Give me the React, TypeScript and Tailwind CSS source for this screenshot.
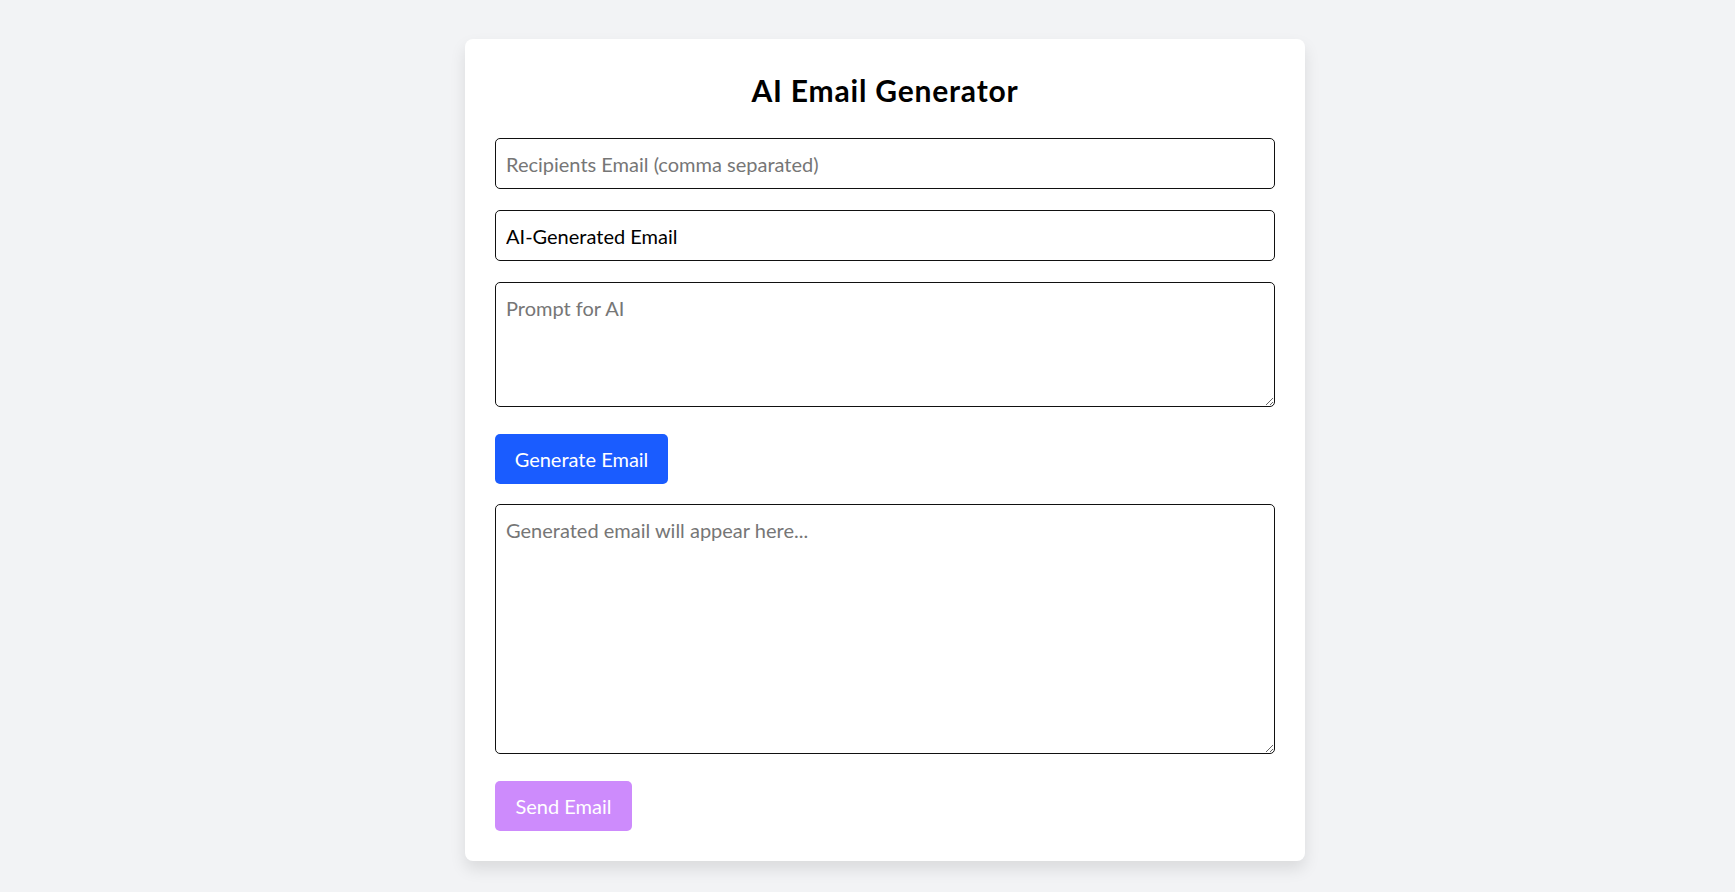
import { useState } from "react";

export default function App() {
  const [recipients, setRecipients] = useState("");
  const [subject, setSubject] = useState("AI-Generated Email");
  const [prompt, setPrompt] = useState("");
  const [body, setBody] = useState("");

  const font = { fontFamily: "Lato, 'Open Sans', sans-serif" };

  return (
    <div
      className="min-h-screen w-full bg-[#f2f3f5] flex justify-center pl-[35px] pt-[39px]"
      style={font}
    >
      <div className="w-[840px] h-[822px] bg-white rounded-[8px] shadow-[0_8px_16px_rgba(0,0,0,0.1)] px-[30px] pt-[30px] pb-[30px] flex flex-col items-start">
        <h2 className="w-full h-[42px] leading-[42px] text-center text-[30px] font-bold tracking-[0.8px] text-black">
          AI Email Generator
        </h2>

        <input
          type="text"
          value={recipients}
          onChange={(e) => setRecipients(e.target.value)}
          placeholder="Recipients Email (comma separated)"
          className="mt-[27px] w-full h-[51px] px-[10px] border-[1.25px] border-[#111] rounded-[5px] text-[20px] text-black placeholder:text-[#767676] outline-none"
        />

        <input
          type="text"
          value={subject}
          onChange={(e) => setSubject(e.target.value)}
          className="mt-[21px] w-full h-[51px] px-[10px] border-[1.25px] border-[#111] rounded-[5px] text-[20px] text-black outline-none"
        />

        <textarea
          value={prompt}
          onChange={(e) => setPrompt(e.target.value)}
          placeholder="Prompt for AI"
          className="mt-[21px] block w-full h-[125px] px-[10px] pt-[11px] pb-[8px] border-[1.25px] border-[#111] rounded-[5px] text-[20px] leading-[28px] text-black placeholder:text-[#767676] outline-none"
        />

        <button className="mt-[27px] w-[173px] h-[50px] rounded-[5px] bg-[#1a5cff] text-white text-[20px]">
          Generate Email
        </button>

        <textarea
          value={body}
          onChange={(e) => setBody(e.target.value)}
          placeholder="Generated email will appear here..."
          className="mt-[20px] block w-full h-[250px] px-[10px] pt-[11px] pb-[8px] border-[1.25px] border-[#111] rounded-[5px] text-[20px] leading-[28px] text-black placeholder:text-[#767676] outline-none"
        />

        <button
          disabled
          className="mt-[27px] w-[137px] h-[50px] rounded-[5px] bg-[#cd8bfc] text-white text-[20px]"
        >
          Send Email
        </button>
      </div>
    </div>
  );
}
